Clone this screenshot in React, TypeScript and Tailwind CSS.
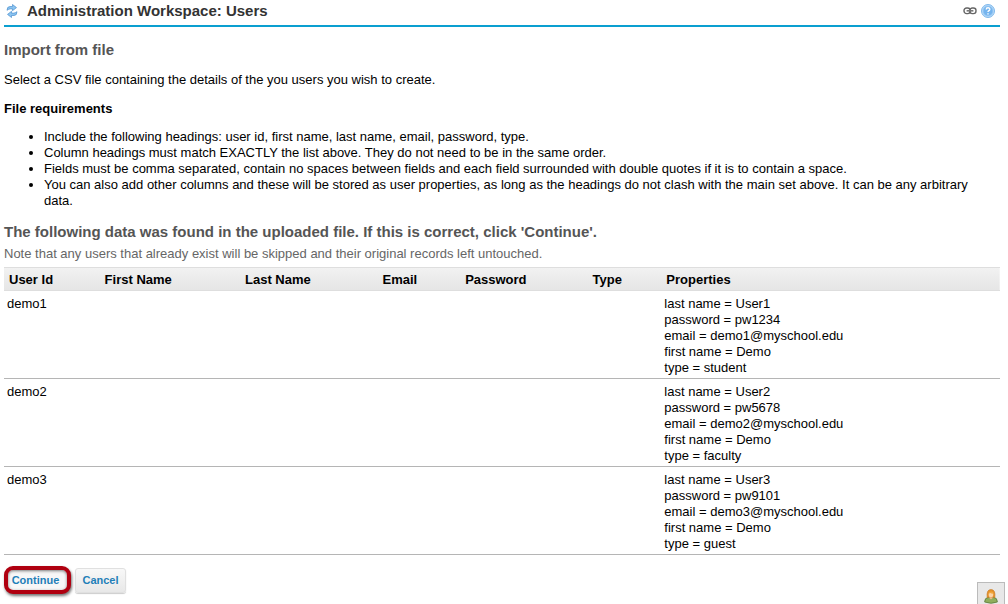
import React from "react";

const users = [
  { id: "demo1", props: ["last name = User1", "password = pw1234", "email = demo1@myschool.edu", "first name = Demo", "type = student"] },
  { id: "demo2", props: ["last name = User2", "password = pw5678", "email = demo2@myschool.edu", "first name = Demo", "type = faculty"] },
  { id: "demo3", props: ["last name = User3", "password = pw9101", "email = demo3@myschool.edu", "first name = Demo", "type = guest"] },
];

const columns = [
  { label: "User Id", width: "w-[9.6%]" },
  { label: "First Name", width: "w-[14.1%]" },
  { label: "Last Name", width: "w-[13.8%]" },
  { label: "Email", width: "w-[8.3%]" },
  { label: "Password", width: "w-[12.8%]" },
  { label: "Type", width: "w-[7.4%]" },
  { label: "Properties", width: "w-[34%]" },
];

function RefreshIcon() {
  return (
    <svg width="12" height="14" viewBox="0 0 12 14" aria-hidden="true">
      <path d="M1 6.3 Q1 2.5 4 2.5 H6.5 V0.5 L10.5 3.6 L6.5 6.7 V4.9 H4.5 Q3 4.7 1 6.3Z" fill="#8cc4f0" stroke="#4a8fce" strokeWidth="0.7" />
      <path d="M11 7.7 Q11 11.5 8 11.5 H5.5 V13.5 L1.5 10.4 L5.5 7.3 V9.1 H7.5 Q9 9.3 11 7.7Z" fill="#8cc4f0" stroke="#4a8fce" strokeWidth="0.7" />
    </svg>
  );
}

function LinkIcon() {
  return (
    <svg width="14" height="8" viewBox="0 0 14 8" fill="none" aria-hidden="true">
      <rect x="1" y="1" width="6.2" height="5.6" rx="2.6" stroke="#666" strokeWidth="1.4" />
      <rect x="6.8" y="1" width="6.2" height="5.6" rx="2.6" stroke="#666" strokeWidth="1.4" />
      <path d="M3.6 3.8 H10.4" stroke="#777" strokeWidth="1.6" />
    </svg>
  );
}

function HelpIcon() {
  return (
    <svg width="14" height="14" viewBox="0 0 14 14" fill="none" aria-hidden="true">
      <circle cx="7" cy="7" r="6.5" fill="#b5d9f8" stroke="#7fb8ea" />
      <circle cx="7" cy="7" r="4.9" fill="#74b4ee" stroke="#98c9f4" strokeWidth="0.7" />
      <path d="M5.2 5.5 Q5.3 3.8 7 3.8 Q8.9 3.8 8.8 5.4 Q8.7 6.4 7.6 6.9 Q7 7.2 7 8.1 M7 9.2 V10.5" stroke="#fff" strokeWidth="1.4" />
    </svg>
  );
}

function PersonIcon() {
  return (
    <svg width="14" height="15" viewBox="0 0 14 15" aria-hidden="true">
      <path d="M0.6 13 Q0.6 8.8 4.5 8.3 H9.5 Q13.4 8.8 13.4 13 Q7 15.6 0.6 13Z" fill="#8fae5c" stroke="#5d7c3c" strokeWidth="0.8" />
      <path d="M5.3 7 H8.7 V9 L7 10.5 L5.3 9Z" fill="#f2b98a" />
      <path d="M3.2 8.7 Q2.2 0.5 7 0.5 Q11.8 0.5 10.8 8.7 L8.9 8 H5.1Z" fill="#e6932b" stroke="#c4741c" strokeWidth="0.6" />
      <ellipse cx="7" cy="5.7" rx="2.3" ry="2.6" fill="#fbd3a6" />
      <path d="M4.5 4.8 Q5 2.3 7.5 2.5 Q9.5 3 9.5 4.8 Q7 4.8 6.3 4Z" fill="#f0a63c" />
    </svg>
  );
}

export default function App() {
  return (
    <div className="relative min-h-screen bg-white pr-2 pl-1 font-['Liberation_Sans',Arial,sans-serif] text-[13px] leading-4 text-black">
      <header className="flex items-center border-b-2 border-[#0a9fd0] pt-[3px] pr-[5px] pb-1.5 pl-0.5">
        <a href="#refresh" aria-label="Refresh" className="flex"><RefreshIcon /></a>
        <h1 className="grow pl-[9px] text-[15px] leading-4 font-bold text-[#333]">Administration Workspace: Users</h1>
        <div className="flex items-center gap-1">
          <a href="#link" aria-label="Link" className="flex"><LinkIcon /></a>
          <a href="#help" aria-label="Help" className="flex"><HelpIcon /></a>
        </div>
      </header>
      <main>
        <h2 className="mt-[15px] text-[15px] leading-4 font-bold text-[#555]">Import from file</h2>
        <p className="mt-3.5">Select a CSV file containing the details of the you users you wish to create.</p>
        <h3 className="mt-[13px] font-bold">File requirements</h3>
        <ul className="mt-3 list-disc pl-10">
          <li>Include the following headings: user id, first name, last name, email, password, type.</li>
          <li>Column headings must match EXACTLY the list above. They do not need to be in the same order.</li>
          <li>Fields must be comma separated, contain no spaces between fields and each field surrounded with double quotes if it is to contain a space.</li>
          <li>You can also add other columns and these will be stored as user properties, as long as the headings do not clash with the main set above. It can be any arbitrary data.</li>
        </ul>
        <h2 className="mt-[15px] text-[15px] leading-4 font-bold text-[#555]">The following data was found in the uploaded file. If this is correct, click 'Continue'.</h2>
        <p className="mt-1.5 text-[#666]">Note that any users that already exist will be skipped and their original records left untouched.</p>
        <table className="mt-[5px] w-full table-fixed border-separate border-spacing-0 text-left">
          <thead className="bg-linear-to-b from-[#f2f2f2] to-[#e5e5e5]">
            <tr>
              {columns.map((c) => (
                <th key={c.label} scope="col" className={`border-y border-[#dedede] px-[5px] pt-1 pb-0.5 font-bold ${c.width}`}>{c.label}</th>
              ))}
            </tr>
          </thead>
          <tbody>
            {users.map((u) => (
              <tr key={u.id} className="align-top">
                <td className="border-b border-[#b5b5b5] px-[3px] pt-[5px] pb-0.5">{u.id}</td>
                {columns.slice(1, 6).map((c) => (
                  <td key={c.label} className="border-b border-[#b5b5b5]" />
                ))}
                <td className="border-b border-[#b5b5b5] px-[3px] pt-[5px] pb-0.5">
                  {u.props.map((p) => <div key={p}>{p}</div>)}
                </td>
              </tr>
            ))}
          </tbody>
        </table>
        <div className="mt-[11px] flex items-center gap-1 text-[11px] font-bold text-[#1f7fb8]">
          <button type="button" className="h-7 w-[67px] rounded-[9px] border-4 border-[#b00010] bg-[#f7f7f7] pr-1 shadow-[1px_2px_3px_rgba(0,0,0,0.55),inset_0_1px_3px_rgba(0,0,0,0.5)]">Continue</button>
          <button type="button" className="h-[25px] w-[51px] rounded-[3px] border border-[#e0e0e0] bg-linear-to-b from-[#f8f8f8] to-[#e8e8e8] shadow-[0_1px_1px_#ccc]">Cancel</button>
        </div>
      </main>
      <button type="button" aria-label="Users online" className="absolute right-[3px] bottom-0 flex h-[22px] w-7 items-end justify-center border border-b-0 border-[#bbb] bg-[#e8e8e8]"><PersonIcon /></button>
    </div>
  );
}
